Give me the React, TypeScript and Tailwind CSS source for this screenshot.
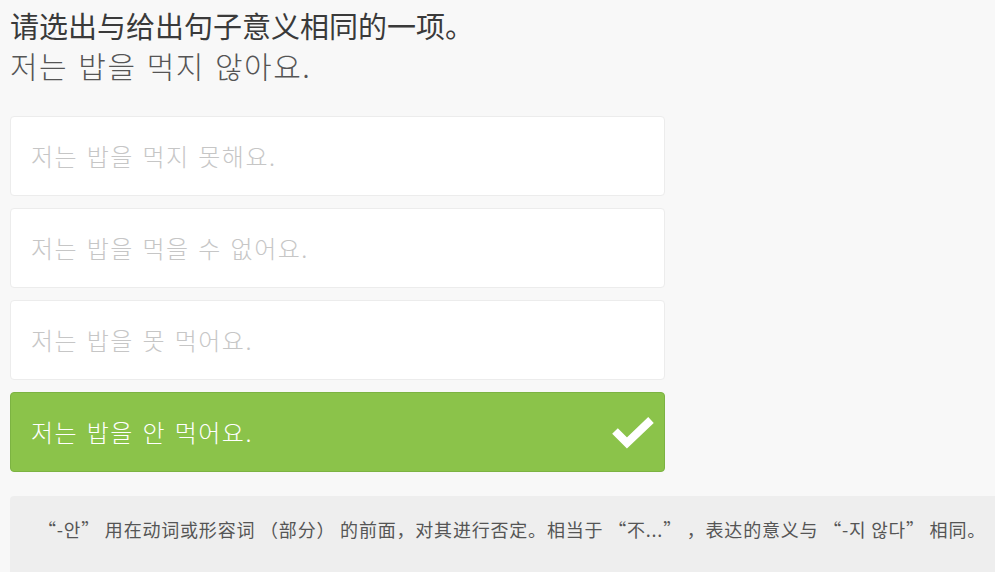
const options = [
  "저는 밥을 먹지 못해요.",
  "저는 밥을 먹을 수 없어요.",
  "저는 밥을 못 먹어요.",
];

function Check() {
  return (
    <svg width="44" height="34" viewBox="0 0 44 34" fill="none">
      <path d="M4 16 L16 28 L40 5" stroke="#fff" strokeWidth="8" strokeLinejoin="miter" />
    </svg>
  );
}

export default function App() {
  return (
    <div
      className="min-h-[572px] w-[995px] overflow-hidden bg-[#f8f8f8] pt-[7px]"
      style={{ fontFamily: '"Noto Sans CJK SC", "Noto Sans CJK KR", sans-serif' }}
    >
      <div className="pl-[10px]">
        <h1 className="text-[29px] leading-[36px] font-normal text-[#3a3a3a]">
          请选出与给出句子意义相同的一项。
        </h1>
        <p
          className="mt-[4px] text-[30px] leading-[36px] font-light text-[#555] tracking-[0.05em] [word-spacing:2px]"
          style={{ fontFamily: '"Noto Sans CJK KR", sans-serif' }}
        >
          저는 밥을 먹지 않아요.
        </p>
      </div>

      <div className="mt-[33px] ml-[10px] flex w-[655px] flex-col gap-3">
        {options.map((o) => (
          <div
            key={o}
            className="flex h-[80px] items-center rounded-[4px] border border-[#ececec] bg-white pl-[20px] text-[24px] font-light text-[#c6c6c6] tracking-[0.06em] [word-spacing:2px]"
            style={{ fontFamily: '"Noto Sans CJK KR", sans-serif' }}
          >
            {o}
          </div>
        ))}
        <div
          className="flex h-[80px] items-center justify-between rounded-[4px] border border-[#7cb342] bg-[#8bc34a] pl-[20px] pr-[9px] text-[24px] font-light text-white tracking-[0.06em] [word-spacing:2px]"
          style={{ fontFamily: '"Noto Sans CJK KR", sans-serif' }}
        >
          <span>저는 밥을 안 먹어요.</span>
          <Check />
        </div>
      </div>

      <div className="mt-[24px] ml-[10px] h-[80px] rounded-tl-[4px] bg-[#eeeeee] pl-[28px] pt-[21px] text-[18px] leading-[24px] tracking-[0.8px] text-[#555] whitespace-nowrap">
        “-안” 用在动词或形容词 （部分） 的前面，对其进行否定。相当于 “不...” ，表达的意义与 “-지 않다” 相同。
      </div>
    </div>
  );
}
